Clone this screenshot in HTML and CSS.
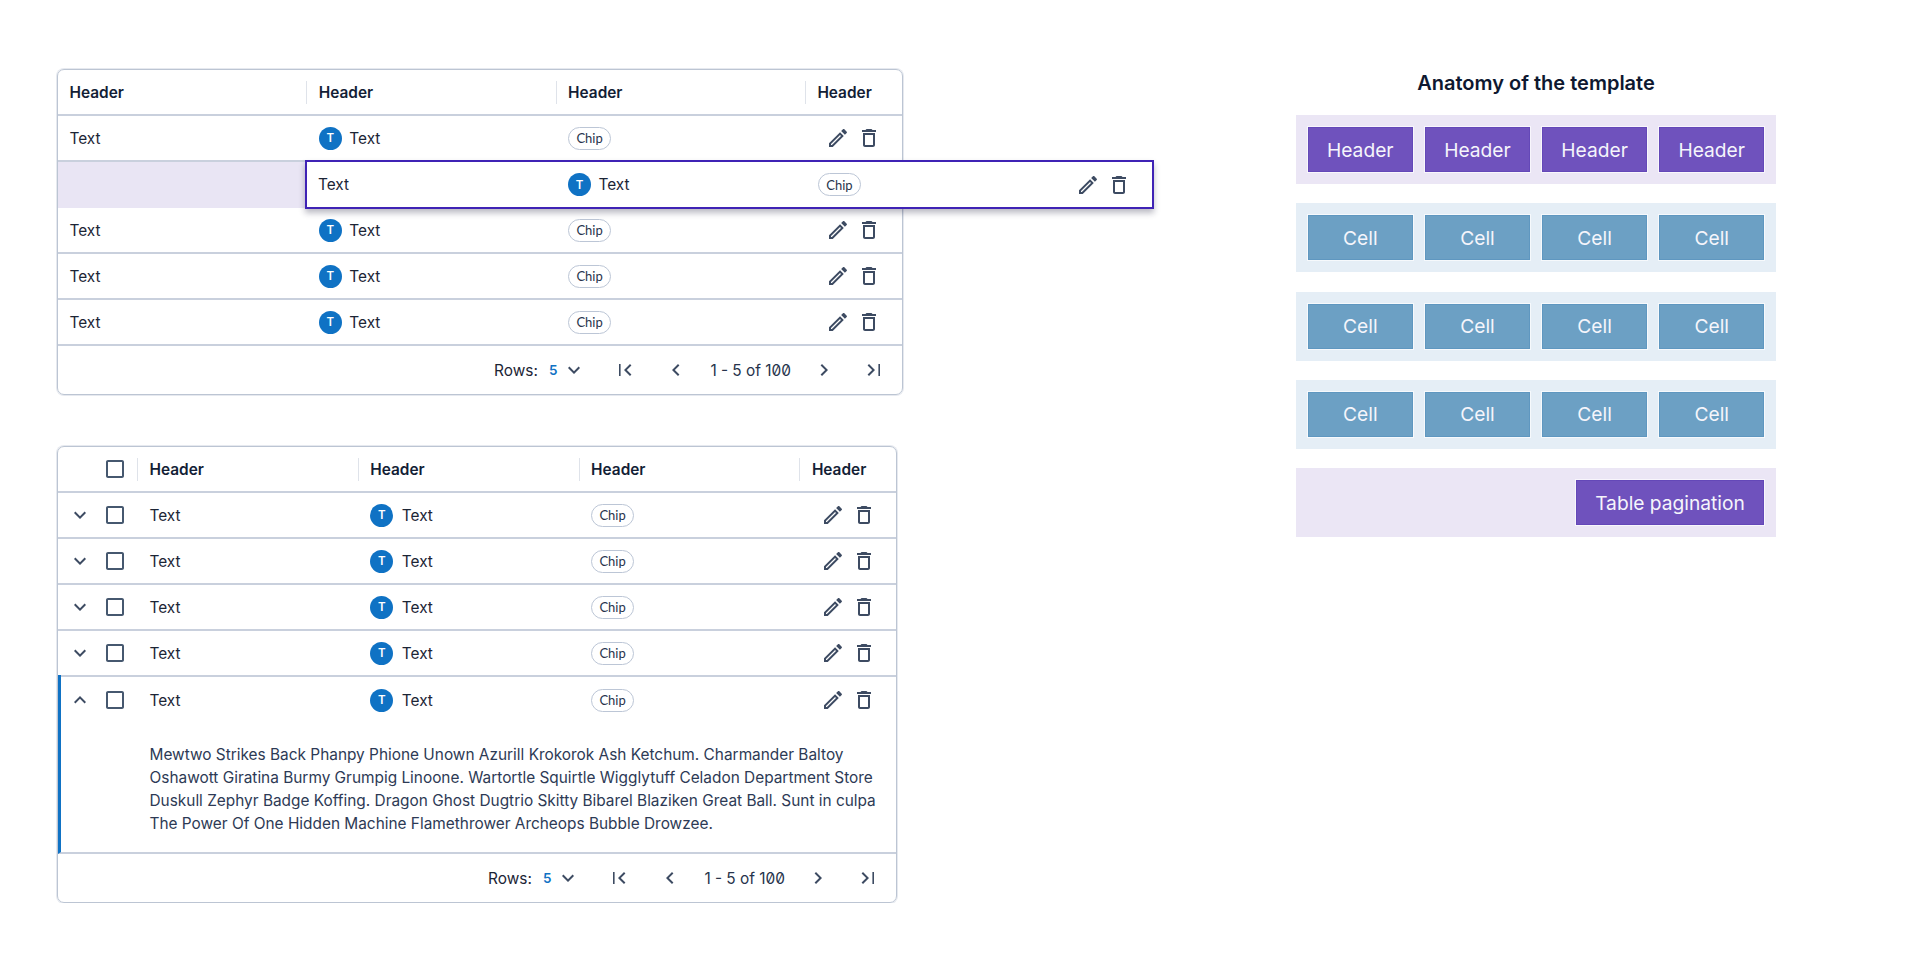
FILE: index.html
```html
<!DOCTYPE html>
<html lang="en">
<head>
<meta charset="utf-8">
<title>Table template anatomy</title>
<link rel="stylesheet" href="styles.css">
</head>
<body>
<svg class="defs" width="0" height="0" aria-hidden="true">
  <symbol id="i-edit" viewBox="0 0 24 24"><path d="M14.06 9.02l.92.92L5.92 19H5v-.92l9.06-9.06M17.66 3c-.25 0-.51.1-.7.29l-1.83 1.83 3.75 3.75 1.83-1.83c.39-.39.39-1.02 0-1.41l-2.34-2.34c-.2-.2-.45-.29-.71-.29zm-3.6 3.19L3 17.25V21h3.75L17.81 9.94l-3.75-3.75z"/></symbol>
  <symbol id="i-trash" viewBox="0 0 24 24"><path d="M6 19c0 1.1.9 2 2 2h8c1.1 0 2-.9 2-2V7H6v12zM8 9h8v10H8V9zm7.5-5l-1-1h-5l-1 1H5v2h14V4h-3.5z"/></symbol>
  <symbol id="i-down" viewBox="0 0 24 24"><path d="M16.59 8.59L12 13.17 7.41 8.59 6 10l6 6 6-6z"/></symbol>
  <symbol id="i-up" viewBox="0 0 24 24"><path d="M12 8l-6 6 1.41 1.41L12 10.83l4.59 4.58L18 14z"/></symbol>
  <symbol id="i-first" viewBox="0 0 24 24"><path d="M18.41 16.59L13.82 12l4.59-4.59L17 6l-6 6 6 6zM6 6h1.6v12H6z"/></symbol>
  <symbol id="i-prev" viewBox="0 0 24 24"><path d="M15.41 7.41L14 6l-6 6 6 6 1.41-1.41L10.83 12z"/></symbol>
  <symbol id="i-next" viewBox="0 0 24 24"><path d="M10 6L8.59 7.41 13.17 12l-4.58 4.59L10 18l6-6z"/></symbol>
  <symbol id="i-last" viewBox="0 0 24 24"><path d="M5.59 7.41L10.18 12l-4.59 4.59L7 18l6-6-6-6zM16.4 6H18v12h-1.6z"/></symbol>
  <symbol id="i-box" viewBox="0 0 24 24"><path d="M19 5v14H5V5h14m0-2H5c-1.1 0-2 .9-2 2v14c0 1.1.9 2 2 2h14c1.1 0 2-.9 2-2V5c0-1.1-.9-2-2-2z"/></symbol>
</svg>

<main class="page">
  <section class="tables">

    <div class="table table-a">
      <div class="row head">
        <div class="cell"><span>Header</span></div>
        <div class="cell div"><span>Header</span></div>
        <div class="cell div"><span>Header</span></div>
        <div class="cell div"><span>Header</span></div>
      </div>
      <div class="row">
        <div class="cell">Text</div>
        <div class="cell"><span class="avatar">T</span>Text</div>
        <div class="cell"><span class="chip">Chip</span></div>
        <div class="cell actions"><svg class="icon"><use href="#i-edit"/></svg><svg class="icon"><use href="#i-trash"/></svg></div>
      </div>
      <div class="row placeholder">
        <div class="dragged">
          <div class="cell">Text</div>
          <div class="cell"><span class="avatar">T</span>Text</div>
          <div class="cell"><span class="chip">Chip</span></div>
          <div class="cell actions"><svg class="icon"><use href="#i-edit"/></svg><svg class="icon"><use href="#i-trash"/></svg></div>
        </div>
      </div>
      <div class="row">
        <div class="cell">Text</div>
        <div class="cell"><span class="avatar">T</span>Text</div>
        <div class="cell"><span class="chip">Chip</span></div>
        <div class="cell actions"><svg class="icon"><use href="#i-edit"/></svg><svg class="icon"><use href="#i-trash"/></svg></div>
      </div>
      <div class="row">
        <div class="cell">Text</div>
        <div class="cell"><span class="avatar">T</span>Text</div>
        <div class="cell"><span class="chip">Chip</span></div>
        <div class="cell actions"><svg class="icon"><use href="#i-edit"/></svg><svg class="icon"><use href="#i-trash"/></svg></div>
      </div>
      <div class="row">
        <div class="cell">Text</div>
        <div class="cell"><span class="avatar">T</span>Text</div>
        <div class="cell"><span class="chip">Chip</span></div>
        <div class="cell actions"><svg class="icon"><use href="#i-edit"/></svg><svg class="icon"><use href="#i-trash"/></svg></div>
      </div>
      <div class="foot">
        <span>Rows:</span><b class="rows-val">5</b><svg class="icon rows-caret"><use href="#i-down"/></svg>
        <svg class="icon pg-first"><use href="#i-first"/></svg>
        <svg class="icon pg-prev"><use href="#i-prev"/></svg>
        <span class="range">1 - 5 of 100</span>
        <svg class="icon pg-next"><use href="#i-next"/></svg>
        <svg class="icon pg-last"><use href="#i-last"/></svg>
      </div>
    </div>

    <div class="table table-b">
      <div class="row head">
        <div class="lead"><span class="tool"></span><svg class="icon box"><use href="#i-box"/></svg></div>
        <div class="cell div"><span>Header</span></div>
        <div class="cell div"><span>Header</span></div>
        <div class="cell div"><span>Header</span></div>
        <div class="cell div"><span>Header</span></div>
      </div>
      <div class="row">
        <div class="lead"><svg class="icon tool"><use href="#i-down"/></svg><svg class="icon box"><use href="#i-box"/></svg></div>
        <div class="cell">Text</div>
        <div class="cell"><span class="avatar">T</span>Text</div>
        <div class="cell"><span class="chip">Chip</span></div>
        <div class="cell actions"><svg class="icon"><use href="#i-edit"/></svg><svg class="icon"><use href="#i-trash"/></svg></div>
      </div>
      <div class="row">
        <div class="lead"><svg class="icon tool"><use href="#i-down"/></svg><svg class="icon box"><use href="#i-box"/></svg></div>
        <div class="cell">Text</div>
        <div class="cell"><span class="avatar">T</span>Text</div>
        <div class="cell"><span class="chip">Chip</span></div>
        <div class="cell actions"><svg class="icon"><use href="#i-edit"/></svg><svg class="icon"><use href="#i-trash"/></svg></div>
      </div>
      <div class="row">
        <div class="lead"><svg class="icon tool"><use href="#i-down"/></svg><svg class="icon box"><use href="#i-box"/></svg></div>
        <div class="cell">Text</div>
        <div class="cell"><span class="avatar">T</span>Text</div>
        <div class="cell"><span class="chip">Chip</span></div>
        <div class="cell actions"><svg class="icon"><use href="#i-edit"/></svg><svg class="icon"><use href="#i-trash"/></svg></div>
      </div>
      <div class="row">
        <div class="lead"><svg class="icon tool"><use href="#i-down"/></svg><svg class="icon box"><use href="#i-box"/></svg></div>
        <div class="cell">Text</div>
        <div class="cell"><span class="avatar">T</span>Text</div>
        <div class="cell"><span class="chip">Chip</span></div>
        <div class="cell actions"><svg class="icon"><use href="#i-edit"/></svg><svg class="icon"><use href="#i-trash"/></svg></div>
      </div>
      <div class="expanded">
        <div class="row open">
          <div class="lead"><svg class="icon tool"><use href="#i-up"/></svg><svg class="icon box"><use href="#i-box"/></svg></div>
          <div class="cell">Text</div>
          <div class="cell"><span class="avatar">T</span>Text</div>
          <div class="cell"><span class="chip">Chip</span></div>
          <div class="cell actions"><svg class="icon"><use href="#i-edit"/></svg><svg class="icon"><use href="#i-trash"/></svg></div>
        </div>
        <p class="detail">Mewtwo Strikes Back Phanpy Phione Unown Azurill Krokorok Ash Ketchum. Charmander Baltoy Oshawott Giratina Burmy Grumpig Linoone. Wartortle Squirtle Wigglytuff Celadon Department Store Duskull Zephyr Badge Koffing. Dragon Ghost Dugtrio Skitty Bibarel Blaziken Great Ball. Sunt in culpa The Power Of One Hidden Machine Flamethrower Archeops Bubble Drowzee.</p>
      </div>
      <div class="foot">
        <span>Rows:</span><b class="rows-val">5</b><svg class="icon rows-caret"><use href="#i-down"/></svg>
        <svg class="icon pg-first"><use href="#i-first"/></svg>
        <svg class="icon pg-prev"><use href="#i-prev"/></svg>
        <span class="range">1 - 5 of 100</span>
        <svg class="icon pg-next"><use href="#i-next"/></svg>
        <svg class="icon pg-last"><use href="#i-last"/></svg>
      </div>
    </div>
  </section>

  <aside class="anatomy">
    <h2 class="anatomy-title">Anatomy of the template</h2>
    <div class="band band-purple">
      <div class="block">Header</div><div class="block">Header</div><div class="block">Header</div><div class="block">Header</div>
    </div>
    <div class="band band-blue">
      <div class="block">Cell</div><div class="block">Cell</div><div class="block">Cell</div><div class="block">Cell</div>
    </div>
    <div class="band band-blue">
      <div class="block">Cell</div><div class="block">Cell</div><div class="block">Cell</div><div class="block">Cell</div>
    </div>
    <div class="band band-blue">
      <div class="block">Cell</div><div class="block">Cell</div><div class="block">Cell</div><div class="block">Cell</div>
    </div>
    <div class="band band-purple band-end">
      <div class="block block-wide">Table pagination</div>
    </div>
  </aside>
</main>
</body>
</html>
```

FILE: styles.css
```css
* { box-sizing: border-box; }

html, body { margin: 0; padding: 0; background: #fff; }

body {
  font-family: Inter, "Liberation Sans", sans-serif;
  font-size: 15.4px;
  color: #1c2536;
}

.defs { position: absolute; }

.page {
  display: flex;
  align-items: flex-start;
  padding: 69px 0 0 57px;
}

.tables {
  display: flex;
  flex-direction: column;
  gap: 51px;
  width: 846px;
}

.table {
  border: 1px solid #bcc5d3;
  border-radius: 7px;
  box-shadow: 0 0 0 1px rgba(200, 207, 220, .45);
}

.table-a { width: 846px; }
.table-b { width: 840px; }

.row {
  display: flex;
  align-items: stretch;
  height: 46px;
  border-bottom: 2px solid #c9d0dd;
}

.row.open { border-bottom: 0; }

.cell {
  position: relative;
  display: flex;
  align-items: center;
  flex: 0 0 249.3px;
  padding-left: 11.5px;
}

.table-a .cell:last-child { flex: 1 1 0; }
.table-b .cell { flex-basis: 220.8px; padding-left: 11.5px; }
.table-b .cell:last-child { flex: 1 1 0; }

.head .cell { font-weight: 600; color: #131e36; }

.cell.div::before {
  content: "";
  position: absolute;
  left: -1px;
  top: 11px;
  height: 23px;
  width: 1px;
  background: #dfe3ea;
}

.lead {
  display: flex;
  align-items: center;
  flex: 0 0 80px;
  padding-left: 10px;
}

.tool { flex: 0 0 24px; width: 24px; height: 24px; }
.lead .box { margin-left: 11px; fill: #46586f; }

.avatar {
  display: flex;
  align-items: center;
  justify-content: center;
  width: 23px;
  height: 23px;
  margin-right: 7.5px;
  border-radius: 50%;
  background: #0f72c4;
  color: #fff;
  font-size: 11.5px;
  font-weight: 600;
}

.table-b .avatar { margin-right: 8.5px; }

.chip {
  display: flex;
  align-items: center;
  justify-content: center;
  width: 43px;
  height: 23px;
  border: 1px solid #bcc6d6;
  border-radius: 12px;
  font-family: Lato, sans-serif;
  font-size: 13px;
  color: #27344c;
}

.icon {
  display: block;
  flex: 0 0 24px;
  width: 24px;
  height: 24px;
  fill: #3d4b62;
}

.actions { gap: 7px; padding-left: 20.6px; }
.table-b .actions { padding-left: 21px; }

.placeholder {
  position: relative;
  background: #e9e5f4;
  border-bottom: 0;
}

.dragged {
  position: absolute;
  left: 247px;
  top: -2px;
  display: flex;
  width: 849px;
  height: 49px;
  background: #fff;
  border: 2px solid #3f23b5;
  box-shadow: 0 4px 6px rgba(30, 30, 60, .3);
  z-index: 2;
}

.dragged .cell { flex-basis: 250px; padding-left: 11px; }
.dragged .cell.actions { flex: 1 1 0; padding-left: 19px; }

.foot {
  display: flex;
  align-items: center;
  justify-content: flex-end;
  height: 48px;
  padding-right: 16px;
}

.rows-val { margin-left: 11px; color: #0f72c4; font-weight: 600; font-size: 13.5px; }
.rows-caret { margin-left: 5px; }
.pg-first { margin-left: 27px; }
.pg-prev { margin-left: 27px; }
.range {
  margin: 0 21px 0 22px;
  font-variant-numeric: slashed-zero;
  font-feature-settings: "zero" 1;
  color: #27344c;
}
.pg-last { margin-left: 26px; }

.expanded {
  height: 179px;
  margin-top: -2px;
  padding-top: 2px;
  border-left: 3px solid #0f72c4;
  border-bottom: 2px solid #c9d0dd;
}
.expanded .lead { flex-basis: 77px; padding-left: 7px; }

.detail {
  margin: 20px 0 0 88.5px;
  width: 735px;
  font-size: 15.4px;
  line-height: 23px;
  color: #2d3a55;
}

.anatomy {
  display: flex;
  flex-direction: column;
  gap: 19.25px;
  width: 480px;
  margin-left: 393px;
}

.anatomy-title {
  margin: 0 0 -1.25px;
  height: 28px;
  font-size: 20px;
  font-weight: 600;
  line-height: 28px;
  text-align: center;
  color: #0e1830;
}

.band {
  display: flex;
  gap: 10.6px;
  height: 69px;
  padding: 11px;
}

.band-purple { background: #ebe6f5; }
.band-blue { background: #e5eef6; }
.band-end { justify-content: flex-end; }

.block {
  display: flex;
  align-items: center;
  justify-content: center;
  flex: 1 1 0;
  font-size: 19.2px;
  font-weight: 400;
  color: #f5f5fb;
  border: 1px solid rgba(255, 255, 255, .65);
  background-clip: padding-box;
}

.band-purple .block { background-color: #6f52bd; box-shadow: inset 0 0 0 1px #6448b8; }
.band-blue .block { background-color: #6ca0c4; box-shadow: inset 0 0 0 1px #5f97c0; }
.block-wide { flex: 0 0 190px; }
```
